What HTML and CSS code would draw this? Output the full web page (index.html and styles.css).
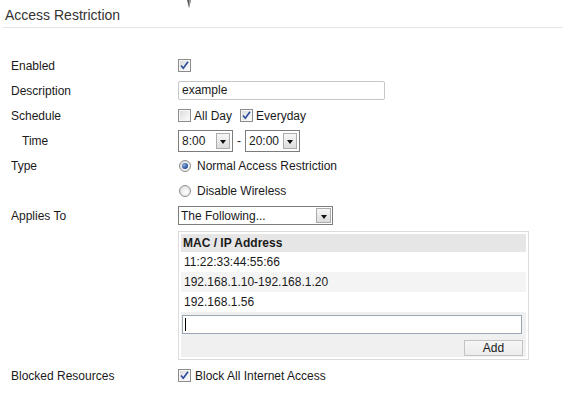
FILE: index.html
```html
<!DOCTYPE html>
<html>
<head>
<meta charset="utf-8">
<link rel="stylesheet" href="styles.css">
</head>
<body>
<div class="page">
  <svg class="pointer" width="8" height="9" viewBox="0 0 8 9"><polygon points="1,0 5,0 3,8" fill="#5a5a5a"/><polygon points="3,0 5,0 3,8" fill="#9a9a9a"/></svg>
  <div class="header"><h1 class="title">Access Restriction</h1></div>
  <div class="form">
    <div class="row">
      <div class="label">Enabled</div>
      <div class="ctrl"><span class="cb"><svg class="tick" width="11" height="11" viewBox="0 0 11 11"><path d="M2 5.5 L4.3 8.2 L9 1.8" fill="none" stroke="#2b4a9c" stroke-width="1.6"/></svg></span></div>
    </div>
    <div class="row">
      <div class="label">Description</div>
      <div class="ctrl"><div class="textbox">example</div></div>
    </div>
    <div class="row">
      <div class="label">Schedule</div>
      <div class="ctrl">
        <span class="cb off"></span><span class="cb-text">All Day</span>
        <span class="cb cb-gap"><svg class="tick" width="11" height="11" viewBox="0 0 11 11"><path d="M2 5.5 L4.3 8.2 L9 1.8" fill="none" stroke="#2b4a9c" stroke-width="1.6"/></svg></span><span class="cb-text">Everyday</span>
      </div>
    </div>
    <div class="row">
      <div class="label indent">Time</div>
      <div class="ctrl">
        <div class="select time"><span class="sel-text">8:00</span><span class="sel-btn"><span class="arrow"></span></span></div>
        <span class="dash">-</span>
        <div class="select time"><span class="sel-text">20:00</span><span class="sel-btn"><span class="arrow"></span></span></div>
      </div>
    </div>
    <div class="row">
      <div class="label">Type</div>
      <div class="ctrl"><span class="radio on"><span class="dot"></span></span><span class="radio-text">Normal Access Restriction</span></div>
    </div>
    <div class="row">
      <div class="label"></div>
      <div class="ctrl"><span class="radio"></span><span class="radio-text">Disable Wireless</span></div>
    </div>
    <div class="row">
      <div class="label">Applies To</div>
      <div class="ctrl"><div class="select wide"><span class="sel-text">The Following...</span><span class="sel-btn"><span class="arrow"></span></span></div></div>
    </div>
    <div class="row-table">
      <div class="maclist">
        <div class="mac-head">MAC / IP Address</div>
        <div class="mac-row">11:22:33:44:55:66</div>
        <div class="mac-row alt">192.168.1.10-192.168.1.20</div>
        <div class="mac-row">192.168.1.56</div>
        <div class="mac-input-row"><div class="mac-input"><span class="caret"></span></div></div>
        <div class="mac-add-row"><div class="btn">Add</div></div>
      </div>
    </div>
    <div class="row blocked">
      <div class="label">Blocked Resources</div>
      <div class="ctrl"><span class="cb"><svg class="tick" width="11" height="11" viewBox="0 0 11 11"><path d="M2 5.5 L4.3 8.2 L9 1.8" fill="none" stroke="#2b4a9c" stroke-width="1.6"/></svg></span><span class="cb-text">Block All Internet Access</span></div>
    </div>
  </div>
</div>
</body>
</html>
```
FILE: styles.css
```css
html, body {
  margin: 0;
  padding: 0;
  background: #fff;
}
body {
  font-family: "Liberation Sans", Arial, sans-serif;
  font-size: 12px;
  color: #1a1a1a;
}
.page {
  position: relative;
  width: 563px;
  height: 402px;
  overflow: hidden;
}
.pointer {
  position: absolute;
  left: 186px;
  top: 0;
}
.header {
  margin-left: 3px;
  padding: 6px 0 3px 2px;
  border-bottom: 1px solid #e6e6e6;
}
.title {
  margin: 0;
  font-size: 14px;
  font-weight: normal;
  line-height: 18px;
  color: #333;
}
.form {
  margin-top: 25px;
  padding-left: 11px;
}
.row {
  display: flex;
  align-items: center;
  height: 25px;
}
.label {
  width: 167px;
  flex: none;
}
.label.indent {
  padding-left: 11px;
  box-sizing: border-box;
}
.ctrl {
  display: flex;
  align-items: center;
}
.cb {
  width: 13px;
  height: 13px;
  box-sizing: border-box;
  border: 1px solid #8c8c8c;
  background: linear-gradient(135deg, #d8d8d8 0%, #f4f4f4 70%, #ffffff 100%);
  box-shadow: inset 0 0 0 1px #f6f6f6;
  display: flex;
  align-items: center;
  justify-content: center;
  flex: none;
}
.cb-gap {
  margin-left: 8px;
}
.cb-text {
  margin-left: 3px;
}
.textbox {
  width: 207px;
  height: 19px;
  box-sizing: border-box;
  border: 1px solid #c6c6c6;
  border-radius: 2px;
  padding-left: 3px;
  line-height: 17px;
}
.select {
  display: flex;
  align-items: stretch;
  box-sizing: border-box;
  border: 1px solid #7c7c7c;
  padding: 2px;
  background: #fff;
}
.select.time {
  width: 55px;
  height: 22px;
}
.select.wide {
  width: 155px;
  height: 19px;
  padding: 1px;
}
.sel-text {
  flex: 1;
  display: flex;
  align-items: center;
  padding-left: 1px;
}
.sel-btn {
  width: 14px;
  box-sizing: border-box;
  border: 1px solid #acacac;
  background: linear-gradient(#f7f7f7, #dcdcdc);
  display: flex;
  align-items: center;
  justify-content: center;
}
.select.wide .sel-btn {
  width: 15px;
}
.arrow {
  width: 0;
  height: 0;
  border-left: 3.5px solid transparent;
  border-right: 3.5px solid transparent;
  border-top: 4px solid #111;
  margin-top: 2px;
}
.dash {
  margin: 0 4px 0 4px;
}
.radio {
  width: 12px;
  height: 12px;
  box-sizing: border-box;
  border: 1px solid #8e8e8e;
  border-radius: 50%;
  background: radial-gradient(circle at 60% 60%, #ffffff 0%, #e6e6e6 60%, #cfcfcf 100%);
  display: flex;
  align-items: center;
  justify-content: center;
  margin-left: 1px;
  flex: none;
}
.radio .dot {
  width: 6px;
  height: 6px;
  border-radius: 50%;
  background: radial-gradient(circle at 35% 35%, #8fb0e0 0%, #2d56a0 60%, #1d3c7a 100%);
}
.radio-text {
  margin-left: 6px;
}
.row-table {
  margin-top: 3px;
  margin-left: 167px;
}
.maclist {
  width: 351px;
  box-sizing: border-box;
  border: 1px solid #dcdcdc;
  padding: 2px;
}
.mac-head {
  height: 18px;
  line-height: 18px;
  background: #e6e6e6;
  font-weight: bold;
  padding-left: 2px;
}
.mac-row {
  height: 20px;
  line-height: 20px;
  padding-left: 3px;
}
.mac-row.alt {
  background: #f4f4f4;
}
.mac-input-row {
  background: #f0f0f0;
  padding: 3px 4px 2px 1px;
}
.mac-input {
  height: 19px;
  box-sizing: border-box;
  border: 1px solid #9aa7b7;
  background: #fff;
  display: flex;
  align-items: center;
  padding-left: 2px;
}
.caret {
  width: 1px;
  height: 13px;
  background: #000;
}
.mac-add-row {
  background: #f0f0f0;
  display: flex;
  justify-content: flex-end;
  padding: 4px 3px 1px 0;
}
.btn {
  width: 59px;
  height: 16px;
  box-sizing: border-box;
  border: 1px solid #c4c4c4;
  background: linear-gradient(#f6f6f6, #ececec);
  text-align: center;
  line-height: 14px;
}
.row.blocked {
  margin-top: 3px;
}
.blocked .cb-text {
  margin-left: 4px;
}
```
